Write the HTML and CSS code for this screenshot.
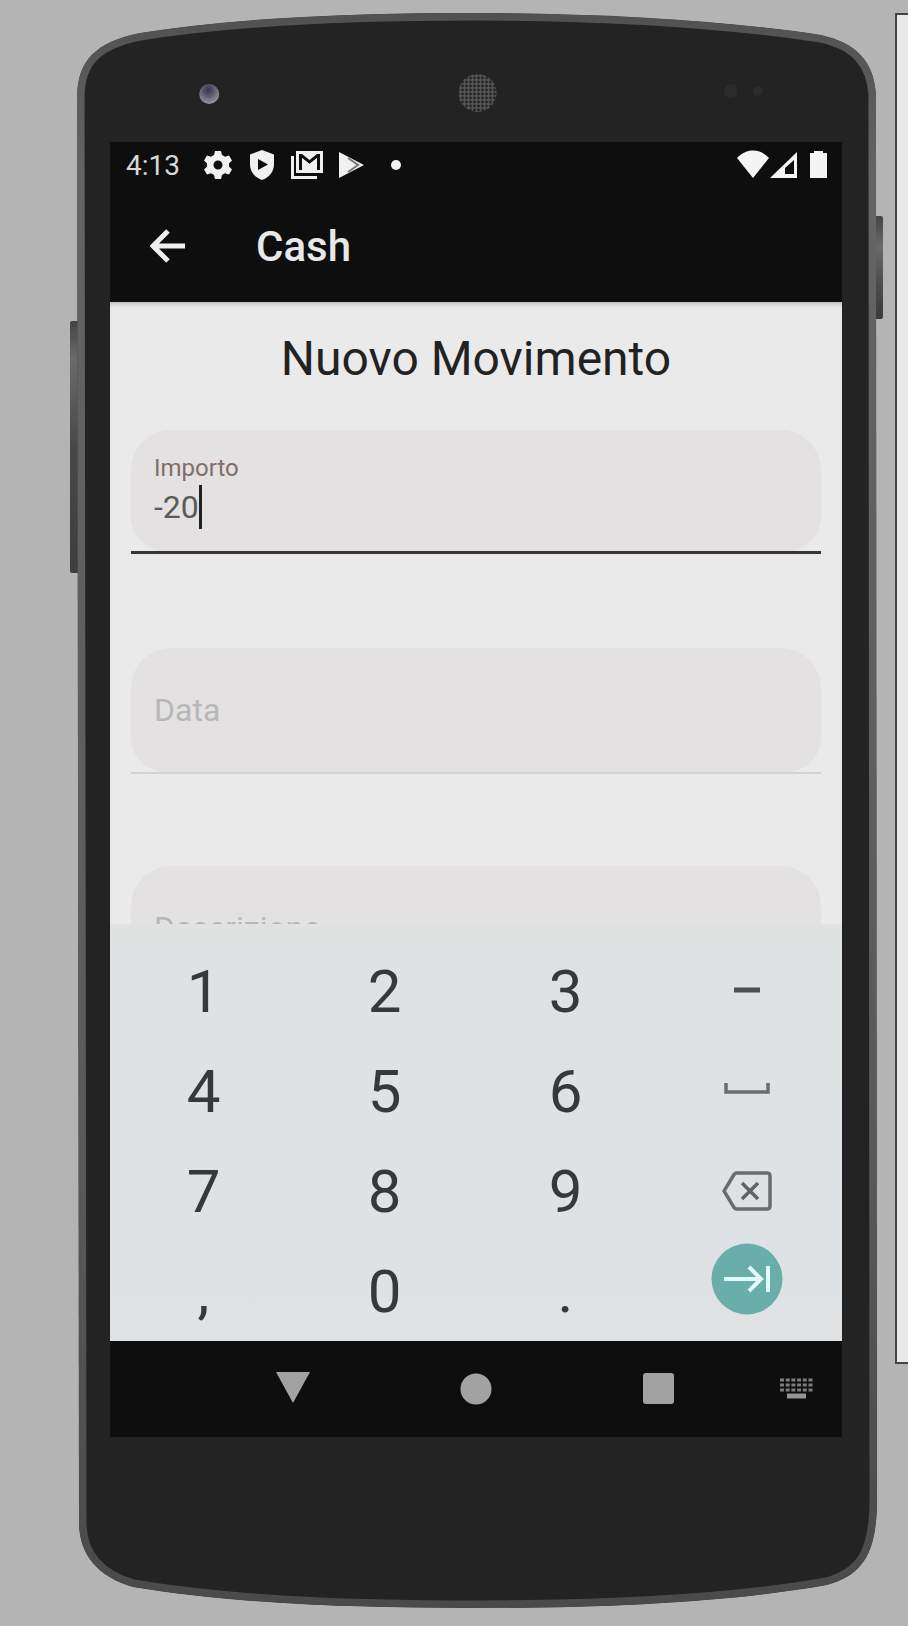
FILE: index.html
```html
<!DOCTYPE html>
<html lang="it">
<head>
<meta charset="utf-8">
<meta name="viewport" content="width=device-width, initial-scale=1">
<title>Cash</title>
<link rel="stylesheet" href="styles.css">
</head>
<body>
<div class="stage">
  <main class="phone">
    <svg class="phone-body" viewBox="68 10 816 1600" preserveAspectRatio="none" aria-hidden="true">
      <defs>
        <linearGradient id="left-key" x1="0" y1="0" x2="0" y2="1">
          <stop offset="0" stop-color="#444"/><stop offset=".15" stop-color="#6a6a6a"/><stop offset=".5" stop-color="#484848"/><stop offset="1" stop-color="#3e3e3e"/>
        </linearGradient>
        <linearGradient id="right-key" x1="0" y1="0" x2="0" y2="1">
          <stop offset="0" stop-color="#444"/><stop offset=".3" stop-color="#6a6a6a"/><stop offset=".6" stop-color="#505050"/><stop offset="1" stop-color="#3a3a3a"/>
        </linearGradient>
        <linearGradient id="rim" x1="0" y1="0" x2="0" y2="1">
          <stop offset="0" stop-color="#515151"/><stop offset=".1" stop-color="#646464"/><stop offset=".7" stop-color="#5a5a5a"/><stop offset="1" stop-color="#4a4a4a"/>
        </linearGradient>
        <radialGradient id="lens" cx=".45" cy=".3" r=".7">
          <stop offset="0" stop-color="#34344e"/><stop offset=".45" stop-color="#5c5c6c"/><stop offset="1" stop-color="#9a9aa0"/>
        </radialGradient>
        <pattern id="mesh" width="4" height="4" patternUnits="userSpaceOnUse">
          <rect width="4" height="4" fill="#555"/><circle cx="2" cy="2" r="1.4" fill="#262626"/>
        </pattern>
        <clipPath id="shell">
          <path d="M77 95C78 60 96 42 140 33C240 17 360 13 475 13C600 13 720 20 820 35C856 43 873 62 875 95L876 1500C876 1553 862 1575 826 1585C730 1602 610 1608 475 1608C340 1608 230 1603 133 1587C98 1577 80 1555 79 1525Z"/>
        </clipPath>
      </defs>
      <rect x="70" y="321" width="10" height="252" rx="2" fill="url(#left-key)"/>
      <rect x="872" y="216" width="10" height="103" rx="2" fill="url(#right-key)"/>
      <path clip-path="url(#shell)" d="M77 95C78 60 96 42 140 33C240 17 360 13 475 13C600 13 720 20 820 35C856 43 873 62 875 95L876 1500C876 1553 862 1575 826 1585C730 1602 610 1608 475 1608C340 1608 230 1603 133 1587C98 1577 80 1555 79 1525Z" fill="#232323" stroke="url(#rim)" stroke-width="15"/>
      <circle cx="209" cy="94" r="10" fill="url(#lens)"/>
      <circle cx="477" cy="93" r="19" fill="url(#mesh)"/>
      <circle cx="730" cy="91" r="7" fill="#2b2b2b"/>
      <circle cx="757" cy="91" r="5" fill="#2b2b2b"/>
    </svg>

    <div class="screen">
      <header class="top">
        <div class="status">
          <time class="clock">4:13</time>
          <svg class="status-icons" viewBox="0 0 204 32" aria-hidden="true">
            <g fill="#f0f0f0">
              <path fill-rule="evenodd" d="M11 2H17L18 6L21 7.700L25 6.400L28 11.600L25 14.500V17.500L28 20.400L25 25.600L21 24.300L18 26L17 30H11L10 26L7 24.300L3 25.600L0 20.400L3 17.500V14.500L0 11.600L3 6.400L7 7.700L10 6ZM14 11.500A4.500 4.500 0 1 0 14 20.500A4.500 4.500 0 1 0 14 11.500Z"/>
              <path fill-rule="evenodd" d="M58 1L70 5.500V15C70 23 65 28.500 58 31C51 28.500 46 23 46 15V5.500ZM54 10V21L64 15.500Z"/>
              <path d="M87 7H90V27H113V30H87Z"/>
              <path fill-rule="evenodd" d="M92 2H119V24H92ZM95 5V21H98V9L105.500 15L113 9V21H116V5H113L105.500 11L98 5Z"/>
              <path d="M98 9L105.500 15L113 9V21H98Z"/>
              <path d="M135 3L160 16L135 29Z"/>
              <circle cx="192" cy="16" r="5"/>
            </g>
            <path d="M144 9L154 16L144 23" fill="none" stroke="#777" stroke-width="2"/>
          </svg>
          <svg class="signal-icons" viewBox="0 0 92 32" aria-hidden="true">
            <g fill="#f4f4f4">
              <path d="M0 9C9 -1 23 -1 32 9L16 29Z"/>
              <path fill-rule="evenodd" d="M33 29L60 3V29ZM48 25H57V11L48 19Z"/>
              <path d="M77 2H86V4H90V29H73V4H77Z"/>
            </g>
          </svg>
        </div>
        <div class="appbar">
          <button class="back" type="button" aria-label="Indietro">
            <svg width="36" height="36" viewBox="0 0 36 36"><path d="M18 3L3 18L18 33M3 18H35" fill="none" stroke="#eee" stroke-width="5"/></svg>
          </button>
          <span class="appbar-title">Cash</span>
        </div>
      </header>

      <form class="content">
        <h1 class="title">Nuovo Movimento</h1>
        <div class="fields">
          <div class="field field-active">
            <label class="field-label" for="importo">Importo</label>
            <div class="field-row">
              <input class="amount" id="importo" type="text" inputmode="numeric" value="-20">
              <span class="caret"></span>
            </div>
          </div>
          <div class="field">
            <input class="field-input" type="text" placeholder="Data" aria-label="Data">
          </div>
          <div class="field">
            <input class="field-input" type="text" placeholder="Descrizione" aria-label="Descrizione">
          </div>
        </div>
      </form>

      <div class="keypad">
        <button class="key" type="button">1</button>
        <button class="key" type="button">2</button>
        <button class="key" type="button">3</button>
        <button class="key" type="button" aria-label="Meno">
          <svg width="50" height="42" viewBox="0 0 50 42"><path d="M12 20H38" stroke="#4d5052" stroke-width="5"/></svg>
        </button>
        <button class="key" type="button">4</button>
        <button class="key" type="button">5</button>
        <button class="key" type="button">6</button>
        <button class="key" type="button" aria-label="Spazio">
          <svg width="50" height="42" viewBox="0 0 50 42"><path d="M4 13V22H46V13" fill="none" stroke="#6a6d6f" stroke-width="3.500"/></svg>
        </button>
        <button class="key" type="button">7</button>
        <button class="key" type="button">8</button>
        <button class="key" type="button">9</button>
        <button class="key" type="button" aria-label="Cancella">
          <svg width="50" height="42" viewBox="0 0 50 42" fill="none" stroke="#6a6d6f" stroke-width="3.500"><path d="M15 3H45Q48 3 48 6V36Q48 39 45 39H15Q13 39 12 37.500L2 21L12 4.500Q13 3 15 3Z"/><path d="M20 13L36 29M36 13L20 29" stroke="#606365"/></svg>
        </button>
        <button class="key" type="button">,</button>
        <button class="key" type="button">0</button>
        <button class="key" type="button">.</button>
        <button class="key key-next" type="button" aria-label="Avanti">
          <svg class="next" width="72" height="72" viewBox="0 0 72 72"><circle cx="36" cy="36" r="35.500" fill="#6aaeac"/><path d="M13 36H49M38 24L50 36L38 48M57 23V49" fill="none" stroke="#e0fbfb" stroke-width="4"/></svg>
        </button>
      </div>

      <nav class="navbar">
        <button class="nav-key" type="button" aria-label="Indietro"><svg width="34" height="34" viewBox="0 0 34 34"><path d="M0 0H34L17 31Z" fill="#a2a2a2"/></svg></button>
        <button class="nav-key" type="button" aria-label="Home"><svg width="34" height="34" viewBox="0 0 34 34"><circle cx="17" cy="17" r="15.500" fill="#a2a2a2"/></svg></button>
        <button class="nav-key" type="button" aria-label="Recenti"><svg width="34" height="34" viewBox="0 0 34 34"><rect x="1" y="1" width="31" height="31" rx="3" fill="#a2a2a2"/></svg></button>
        <button class="nav-key" type="button" aria-label="Tastiera"><svg width="34" height="34" viewBox="0 0 34 34"><path d="M1 8H34M1 13H34M1 18H34" stroke="#7c7c7c" stroke-width="3" stroke-dasharray="4 1.700"/><path d="M8 24H27" stroke="#959595" stroke-width="5"/></svg></button>
      </nav>
    </div>
  </main>
  <aside class="side-panel"></aside>
</div>
</body>
</html>
```
FILE: styles.css
```css
* {
  box-sizing: border-box;
}

body {
  margin: 0;
  background: #b4b4b4;
  font-family: Roboto, "Liberation Sans", sans-serif;
}

button {
  margin: 0;
  padding: 0;
  border: 0;
  background: none;
  font: inherit;
  color: inherit;
}

svg {
  display: block;
}

.stage {
  display: flex;
  gap: 10px;
  height: 100vh;
  padding: 10px 0 16px 68px;
}

.phone {
  position: relative;
  flex: 1;
  display: flex;
  padding: 132px 43px 173px 42px;
}

.phone-body {
  position: absolute;
  inset: 0;
  width: 100%;
  height: 100%;
}

.screen {
  position: relative;
  flex: 1;
  min-width: 0;
  display: flex;
  flex-direction: column;
  background: #eaeaea;
}

.side-panel {
  width: 13px;
  margin: 3px 0 246px;
  border: 2px solid #444;
  border-right: 0;
  background: #e8e8e8;
}

.top {
  background: #0e0e0e;
  color: #e8e8e8;
}

.status {
  display: flex;
  align-items: center;
  height: 46px;
  padding: 0 13px 0 16px;
}

.clock {
  width: 78px;
  font-size: 28px;
  color: #d8d8d8;
}

.status-icons {
  width: 204px;
  height: 32px;
}

.signal-icons {
  width: 92px;
  height: 32px;
  margin-left: auto;
}

.appbar {
  display: flex;
  align-items: center;
  gap: 70px;
  height: 114px;
  padding: 2px 40px 0;
}

.appbar-title {
  font-size: 42px;
  font-weight: 500;
}

.content {
  flex: 1;
  min-height: 0;
  overflow: hidden;
  padding: 29px 21px 0;
  box-shadow: inset 0 4px 4px -2px #bbb;
}

.title {
  margin: 0 0 43px;
  font-size: 48px;
  font-weight: 400;
  line-height: 56px;
  text-align: center;
  color: #222;
}

.fields {
  display: grid;
  gap: 92px;
}

.field {
  display: flex;
  flex-direction: column;
  justify-content: center;
  height: 126px;
  padding: 0 23px;
  border-radius: 40px 40px 0 0;
  border-bottom: 2px solid #d4d4d4;
  background:
    radial-gradient(circle at 100% 0, #e3e1e1 36px, #eaeaea 37px) 0 100% / 36px 36px no-repeat,
    radial-gradient(circle at 0 0, #e3e1e1 36px, #eaeaea 37px) 100% 100% / 36px 36px no-repeat,
    #e3e1e1;
}

.field-active {
  height: 124px;
  margin-bottom: 2px;
  border-bottom: 3px solid #383435;
}

.field-label {
  font-size: 24px;
  line-height: 32px;
  color: #806f68;
}

.field-row {
  display: flex;
  align-items: center;
  height: 46px;
}

.amount,
.field-input {
  padding: 0;
  border: 0;
  outline: 0;
  background: none;
  font: inherit;
  font-size: 32px;
  color: #5a5a5a;
}

.amount {
  width: 45px;
}

.caret {
  width: 3px;
  height: 44px;
  background: #222;
}

.field-input::placeholder {
  color: #b8b7b7;
  opacity: 1;
}

.keypad {
  display: grid;
  grid-template-columns: repeat(4, 1fr);
  grid-auto-rows: 100px;
  padding: 17px 5px 0 3px;
  background: linear-gradient(#e0e1e1, #dee2e3 24px, #dfe2e4 90%, #e1e2e4);
  color: #36393b;
}

.key {
  display: flex;
  align-items: center;
  justify-content: center;
  font-size: 60px;
}

.key-next {
  align-items: flex-start;
}

.next {
  margin-top: 2px;
}

.navbar {
  display: grid;
  grid-template-columns: 2fr 2fr 2fr 1fr;
  height: 96px;
  padding-left: 12.5%;
  background: #0e0e0e;
}

.nav-key {
  display: flex;
  align-items: center;
  justify-content: center;
}
```
